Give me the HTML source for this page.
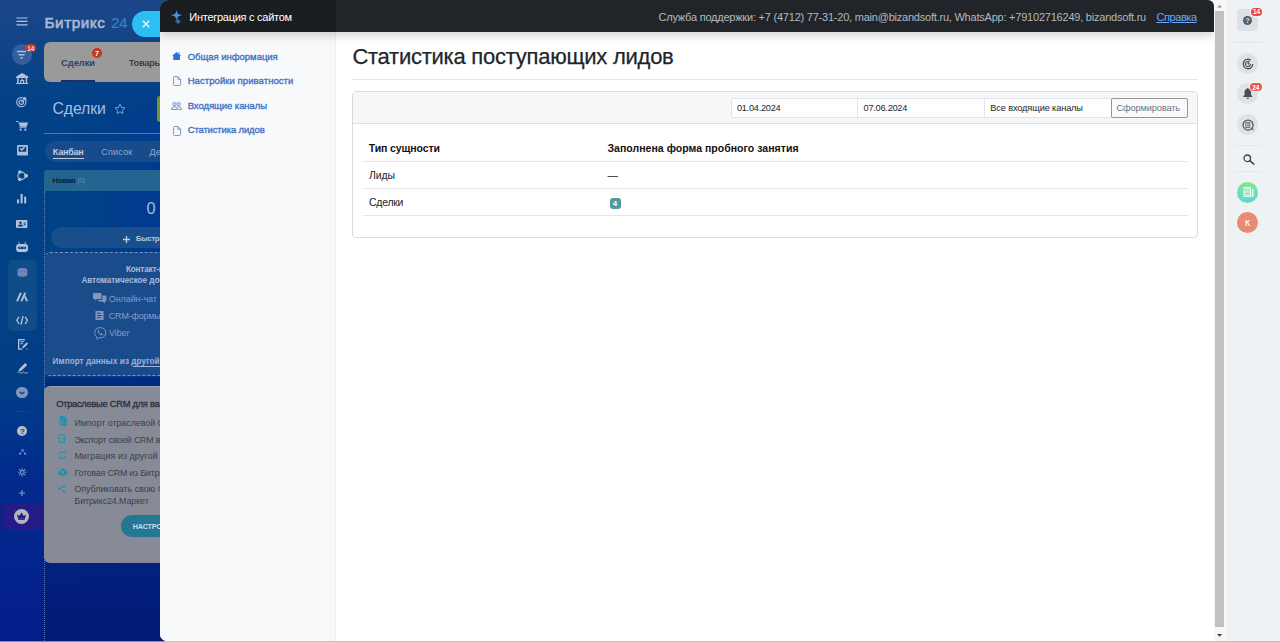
<!DOCTYPE html>
<html lang="ru"><head>
<meta charset="utf-8">
<title>Интеграция с сайтом</title>
<style>
*{box-sizing:border-box;margin:0;padding:0}
html,body{width:1280px;height:642px;overflow:hidden}
body{font-family:"Liberation Sans","DejaVu Sans",sans-serif;position:relative;background:#0b2a9a}
.abs{position:absolute}
.t{position:absolute;white-space:nowrap;line-height:1}
svg{position:absolute;overflow:visible}
#bg{left:0;top:0;width:1280px;height:642px;background:linear-gradient(180deg,#1c478a 0%,#144588 4.7%,#0b4486 10%,#034186 15.6%,#004286 31%,#024185 47%,#023c86 62%,#003486 68.5%,#022a86 74.8%,#012580 85%,#021e7a 93.5%,#021b76 100%);overflow:hidden}
#lstrip{left:70px;top:40px;width:90px;height:560px;background:linear-gradient(90deg,rgba(0,30,190,0),rgba(0,30,190,.22));-webkit-mask-image:linear-gradient(180deg,transparent 0%,#000 25%,#000 55%,transparent 100%);mask-image:linear-gradient(180deg,transparent 0%,#000 25%,#000 55%,transparent 100%)}
#lstrip2{left:0;top:380px;width:44px;height:262px;background:linear-gradient(180deg,rgba(10,40,200,0),rgba(10,40,200,.2) 70%,rgba(10,40,200,.22))}
/* ---------- main slider panel ---------- */
#panel{left:160px;top:0;width:1054px;height:640.700px;background:#fff;border-radius:9px 6px 0 7px;overflow:hidden}
#phead{left:0;top:0;width:1054px;height:32px;background:#212529;box-shadow:0 3px 11px rgba(0,0,0,.2);z-index:3}
#pheadl{left:0;top:0;width:175.500px;height:32px;background:#1b1e21}
#side{left:0;top:32px;width:176px;height:610px;background:#f8f9fa;border-right:1px solid #eceef1}
#scroll{left:1214px;top:0;width:12px;height:642px;background:#f6f6f6;border-right:1px solid #fafbfc}
#thumb{left:1px;top:11px;width:9px;height:616px;background:#c1c1c1}
#right{left:1226px;top:0;width:54px;height:642px;background:#eef2f4}
#botline{left:0;top:640.700px;width:1280px;height:1.300px;background:linear-gradient(90deg,#7388d6 0,#7388d6 163px,#c2c2c2 165px,#c2c2c2 1214px,#b9c0cd 1226px,#b9c0cd 100%)}
/* content */
#title{color:#212529}
#hr{left:192px;top:79px;width:846px;height:1px;background:#e4e6e8}
#card{left:192px;top:91px;width:846px;height:147px;border:1px solid #d9dcdf;border-radius:4px;background:#fff}
#chead{left:0;top:0;width:844px;height:32px;background:#f7f7f7;border-bottom:1px solid #dcdfe2;border-radius:3px 3px 0 0}
.inp{position:absolute;top:5.500px;height:20px;border:1px solid #e1e4e8;background:#fff}
.inp .t{color:#212529}
#btn{position:absolute;left:758px;top:5.500px;width:77px;height:20px;border:1px solid #959595;border-radius:2px;background:#fafafa}
#btn .t{color:#6c757d}
.rl{position:absolute;left:10px;width:825px;height:1px;background:#e3e5e8}
.th{font-weight:bold;color:#111}
.td{color:#212529}
#b4{position:absolute;left:256.500px;top:105.500px;width:11px;height:11.500px;border-radius:3px;background:#4f9a9f}
#b4 .t{font-weight:bold;color:#fff}
.sl{font-weight:normal;color:#3d6fc4;-webkit-text-stroke:.32px #3d6fc4}
/* left bitrix */
.ic{fill:#b4c0d8}
.lt{color:#a9bbdc;font-weight:bold}
.gl{color:#3a3f4a}
</style>
</head>
<body>
<div id="bg" class="abs">
<div id="lstrip" class="abs"></div><div id="lstrip2" class="abs"></div>

<!-- top bar -->
<svg style="left:16px;top:17px" width="12" height="9"><path d="M.5 1h11M.5 4.4h11M.5 7.8h11" stroke="#b8c6e0" stroke-width="1.2" fill="none"></path></svg>
<div class="t" style="left: 44.5px; font-size: 15.3px; -webkit-text-stroke: 0.6px rgb(172, 184, 210); color: rgb(172, 184, 210); letter-spacing: 0.54px; top: 14.6px;">Битрикс</div>
<div class="t" style="left: 110.9px; font-size: 15.3px; -webkit-text-stroke: 0.2px rgb(58, 128, 189); color: rgb(58, 128, 189); letter-spacing: -0.42px; top: 14.6px;">24</div>
<div class="abs" style="left:132px;top:11px;width:40px;height:25.5px;border-radius:13px;background:#2cbef5"></div>
<svg style="left:141.5px;top:20.3px" width="8" height="8"><path d="M.8 .8 L7.2 7.2 M7.2 .8 L.8 7.2" stroke="#f4fbff" stroke-width="1.250" fill="none"></path></svg>
<!-- menu card -->
<div class="abs" style="left:44px;top:42px;width:130px;height:39.5px;border-radius:6px;background:#9a9a9a"></div>
<div class="t" style="left: 61.1px; font-size: 9.3px; font-weight: bold; color: rgb(47, 63, 108); letter-spacing: -0.03px; top: 58.7px;">Сделки</div>
<div class="abs" style="left:61px;top:80px;width:34px;height:2px;background:#1f3060"></div>
<div class="abs" style="left:91.7px;top:48.1px;width:10px;height:10px;border-radius:5px;background:#c43a1e"></div>
<div class="t" style="left: 95px; font-size: 7px; font-weight: bold; color: rgb(255, 255, 255); top: 49.7px;">7</div>
<div class="t" style="left: 128.8px; font-size: 9.3px; font-weight: bold; color: rgb(62, 65, 72); letter-spacing: -0.33px; top: 58.7px;">Товары</div>
<!-- title row -->
<div class="t" style="left: 52.6px; font-size: 15.8px; color: rgb(168, 188, 224); letter-spacing: -0.13px; top: 101.1px;">Сделки</div>
<svg style="left:114px;top:102.7px" width="12" height="12" viewBox="0 0 24 24"><path d="M12 2.5l2.9 6.3 6.8.8-5 4.7 1.3 6.8-6-3.4-6 3.4 1.3-6.8-5-4.7 6.8-.8z" fill="none" stroke="#8fa8d8" stroke-width="1.8" stroke-linejoin="round"></path></svg>
<div class="abs" style="left:157.2px;top:96.3px;width:10px;height:25.7px;border-radius:3px;background:#78962a"></div>
<div class="abs" style="left:44px;top:133.3px;width:120px;height:1px;background:rgba(160,190,235,.45)"></div>
<!-- tabs -->
<div class="abs" style="left:44.5px;top:141.3px;width:130px;height:21px;border-radius:10.5px;background:#174b8b"></div>
<div class="t" style="left: 52.8px; font-size: 9px; font-weight: bold; color: rgb(192, 204, 228); letter-spacing: -0.23px; top: 148.2px;">Канбан</div>
<div class="abs" style="left:52.8px;top:158px;width:31px;height:1px;background:#c0cce4"></div>
<div class="t" style="left: 101.3px; font-size: 9px; color: rgb(143, 168, 212); letter-spacing: 0.21px; top: 148.2px;">Список</div>
<div class="t" style="left: 149.6px; font-size: 9px; color: rgb(143, 168, 212); top: 148.2px;">Дела</div>
<!-- kanban column -->
<div class="abs" style="left:44px;top:170px;width:130px;height:21px;border-radius:3px 0 0 0;background:#236590"></div>
<div class="t" style="left: 52.2px; font-size: 8px; font-weight: bold; color: rgb(12, 34, 56); letter-spacing: -0.32px; top: 177.1px;">Новая</div>
<div class="t" style="left: 77.5px; font-size: 7px; color: rgb(93, 140, 180); letter-spacing: -0.53px; top: 177px;">(0)</div>
<div class="abs" style="left:44px;top:191px;width:1px;height:450px;border-left:1px dotted rgba(160,190,240,.55)"></div>
<div class="t" style="left: 146.6px; font-size: 16.3px; color: rgb(163, 188, 230); letter-spacing: -0.76px; top: 200.2px;">0</div>
<div class="abs" style="left:50.6px;top:227.2px;width:130px;height:20.5px;border-radius:10.3px;background:#194e8c"></div>
<svg style="left:123px;top:235.5px" width="7" height="7"><path d="M3.5 0v7M0 3.5h7" stroke="#c0cce4" stroke-width="1.3"></path></svg>
<div class="t lt" style="left: 136px; font-size: 7.6px; color: rgb(184, 198, 224); letter-spacing: -0.26px; top: 235.1px;">Быстрая сделка</div>
<!-- dashed card -->
<div class="abs" style="left:44.5px;top:252.3px;width:130px;height:124px;border-radius:5px;background:#1a4c8b;border:1px dashed rgba(170,200,240,.6);border-left:none"></div>
<div class="t lt" style="left: 126px; font-size: 8.2px; letter-spacing: -0.19px; top: 266.1px;">Контакт-центр</div>
<div class="t lt" style="left: 81.4px; font-size: 8.2px; letter-spacing: -0.06px; top: 277.4px;">Автоматическое добавление</div>
<div class="t" style="left: 108.8px; font-size: 9px; color: rgb(127, 156, 207); letter-spacing: -0.09px; top: 294.9px;">Онлайн-чат</div>
<div class="t" style="left: 108.8px; font-size: 9px; color: rgb(127, 156, 207); letter-spacing: -0.2px; top: 311.9px;">CRM-формы</div>
<div class="t" style="left: 109.1px; font-size: 9px; color: rgb(127, 156, 207); letter-spacing: -0.14px; top: 328.6px;">Viber</div>
<div class="t lt" style="left: 52.6px; font-size: 8.2px; color: rgb(157, 178, 218); letter-spacing: 0.05px; top: 358.1px;">Импорт данных из другой CRM</div>
<div class="abs" style="left:132.500px;top:365.600px;width:40px;height:1px;background:#9db2da"></div>
<!-- grey card -->
<div class="abs" style="left:45px;top:377px;width:130px;height:12px;background:linear-gradient(180deg,rgba(2,20,110,.28),rgba(2,20,110,.5))"></div>
<div class="abs" style="left:44px;top:386px;width:130px;height:177px;border-radius:6px;background:#878b97;border-top:1px solid #9aa0ae"></div>
<div class="t" style="left: 56.2px; font-size: 9.3px; -webkit-text-stroke: 0.3px rgb(42, 47, 58); color: rgb(42, 47, 58); letter-spacing: -0.26px; top: 399.6px;">Отраслевые CRM для вашего бизнеса</div>
<div class="t gl" style="left: 74.4px; font-size: 8.9px; letter-spacing: -0.03px; top: 418.8px;">Импорт отраслевой CRM</div>
<div class="t gl" style="left: 74.4px; font-size: 8.9px; letter-spacing: -0.19px; top: 435.6px;">Экспорт своей CRM в файл</div>
<div class="t gl" style="left: 74.4px; font-size: 8.9px; letter-spacing: 0.08px; top: 452.1px;">Миграция из другой CRM</div>
<div class="t gl" style="left: 74.4px; font-size: 8.9px; letter-spacing: -0.2px; top: 469.2px;">Готовая CRM из Битрикс24.Маркет</div>
<div class="t gl" style="left: 74.4px; font-size: 8.9px; letter-spacing: -0.02px; top: 484.5px;">Опубликовать свою CRM в</div>
<div class="t gl" style="left: 74.4px; font-size: 8.9px; letter-spacing: -0.08px; top: 497.3px;">Битрикс24.Маркет</div>
<div class="abs" style="left:120.8px;top:515.3px;width:60px;height:21.5px;border-radius:10.8px;background:#247894"></div>
<div class="t" style="left: 132.7px; font-size: 7.2px; font-weight: bold; color: rgb(200, 220, 232); letter-spacing: -0.13px; top: 522.8px;">НАСТРОИТЬ</div>

<!-- chat icon -->
<svg style="left:93px;top:292.800px" width="13.400" height="10.600" viewBox="0 0 27 21"><path d="M2 0h13a2 2 0 0 1 2 2v8a2 2 0 0 1-2 2H8l-4 3.500V12H2a2 2 0 0 1-2-2V2a2 2 0 0 1 2-2z" fill="#8596bd"></path><path d="M19 5h6a2 2 0 0 1 2 2v8a2 2 0 0 1-2 2h-1v4l-4.500-4H13a2 2 0 0 1-2-2v-1h6a2 2 0 0 0 2-2z" fill="#8596bd"></path></svg>
<!-- form icon -->
<svg style="left:95.300px;top:311.100px" width="9" height="9.200" viewBox="0 0 18 18"><path d="M1 0h16v18H1zM4 3.500v2h7v-2zM4 8v2h10V8zM4 12.500v2h8v-2z" fill="#8596bd" fill-rule="evenodd"></path></svg>
<!-- viber -->
<svg style="left:93.500px;top:326.800px" width="12.400" height="13" viewBox="0 0 25 26"><path d="M12.500 1.200c7 0 11 3.500 11 10.300s-4 10.300-11 10.300c-1 0-2-.1-2.900-.3L6 25v-4.700C3 18.600 1.500 15.700 1.500 11.500c0-6.800 4-10.300 11-10.300z" fill="none" stroke="#8596bd" stroke-width="2"></path><path d="M8.500 6.500c-1 .8-1.200 2-.6 3.400 1.300 3 3.500 5.300 6.600 6.600 1.300.5 2.500.2 3.200-.9.400-.7.200-1.300-.4-1.700l-1.500-1c-.6-.4-1.200-.3-1.700.3-.4.500-.9.500-1.500.1-1.200-.8-2.100-1.800-2.800-3-.3-.6-.2-1 .3-1.400.6-.5.700-1.100.3-1.700l-.7-1.100c-.4-.6-.9-.7-1.500-.3z" fill="#8596bd"></path></svg>
<!-- grey-card teal icons -->
<svg style="left:58.400px;top:416px" width="8.800" height="9.900" viewBox="0 0 18 20"><path d="M4 0h9l5 5v15H4v-6h2.500v2.800l5.200-4.300-5.200-4.300V11H4zM0 11.500h7v2H0z" fill="#2a8fa8"></path></svg>
<svg style="left:58.400px;top:433.600px" width="8.800" height="9.100" viewBox="0 0 18 18"><path d="M1 0h10l3 3v4h-2.200V4.200L10 2.200H3.200v13.600H12V13h2.200v5H1z" fill="#2a8fa8"></path><path d="M7 9h8.500M13 6l3.500 3.500L13 13" stroke="#2a8fa8" stroke-width="2" fill="none"></path></svg>
<svg style="left:58.400px;top:451px" width="8.800" height="8.400" viewBox="0 0 18 17"><path d="M2 7c.5-3.500 3.500-5.500 7-5.500 2 0 3.800.8 5 2.200M16 10c-.5 3.500-3.500 5.500-7 5.500-2 0-3.800-.8-5-2.200" stroke="#2a8fa8" stroke-width="2.400" fill="none"></path><path d="M12 4.500h5V0zM6 12.500H1V17z" fill="#2a8fa8"></path></svg>
<svg style="left:57.800px;top:468px" width="9.400" height="7.800" viewBox="0 0 19 15"><path d="M5 15c-3 0-5-2-5-4.500S1.700 6.300 4 6c.5-3.500 3-6 6.300-6 3 0 5.400 2 6 5 1.700.8 2.700 2.500 2.700 4.500 0 3-2.300 5.500-5.500 5.500zM9.800 5.200a2.800 2.800 0 1 0 0 5.600 2.800 2.800 0 0 0 0-5.600z" fill="#2a8fa8" fill-rule="evenodd"></path></svg>
<svg style="left:58.400px;top:485px" width="7.600" height="7.600" viewBox="0 0 15 15"><circle cx="12" cy="2.600" r="2.600" fill="#2a8fa8"></circle><circle cx="3" cy="7.500" r="2.600" fill="#2a8fa8"></circle><circle cx="12" cy="12.400" r="2.600" fill="#2a8fa8"></circle><path d="M12 2.600L3 7.500l9 4.900" stroke="#2a8fa8" stroke-width="1.500" fill="none"></path></svg>
<!-- left icon strip -->
<div class="abs" style="left:7.5px;top:259.7px;width:29px;height:71.5px;border-radius:5px;background:#0e4c8a"></div>
<div class="abs" style="left:0;top:504px;width:44px;height:25.7px;background:linear-gradient(90deg,#0b2486 0,#231b86 5px,#231b86 100%)"></div>

<!-- filter circle -->
<div class="abs" style="left:11.5px;top:44.2px;width:20.6px;height:20.6px;border-radius:50%;background:#335f9f"></div>
<svg style="left:16px;top:50px" width="12" height="10"><path d="M1 1.6h9.2M2.6 4.8h6M4.4 8.1h2.4" stroke="#a9bfe0" stroke-width="1.5" fill="none"></path></svg>
<div class="abs" style="left:25.4px;top:44.4px;width:11px;height:8px;border-radius:4px;background:#c23e22"></div>
<div class="t" style="left: 27.3px; font-size: 6.5px; font-weight: bold; color: rgb(244, 220, 214); letter-spacing: -0.2px; top: 45.8px;">14</div>
<!-- building -->
<svg style="left:16px;top:73px" width="12.4" height="11" viewBox="0 0 24 22"><path d="M12 0L0 7v3h2v10H0v2h24v-2h-2V10h2V7zM5 10h14v10h-3v-6H8v6H5zM10.4 16h3.2v4h-3.2z" fill="#b4c0d8"></path><rect x="10.3" y="11.3" width="3.4" height="2.2" fill="#b4c0d8"></rect></svg>
<!-- target -->
<svg style="left:16px;top:96px" width="11.6" height="11.4" viewBox="0 0 24 24"><circle cx="11" cy="13" r="9.6" fill="none" stroke="#b4c0d8" stroke-width="2.4"></circle><circle cx="11" cy="13" r="4.6" fill="none" stroke="#b4c0d8" stroke-width="2.2"></circle><path d="M11 13L21 3M17 2.2l.6 4.3 4.3.6" stroke="#b4c0d8" stroke-width="2.4" fill="none"></path></svg>
<!-- cart -->
<svg style="left:15.6px;top:121px" width="12.2" height="10" viewBox="0 0 24 20"><path d="M0 0h4.2l1 3H24l-3 8.6H8.2L4.2 2H0z" fill="#b4c0d8"></path><path d="M6.5 12.5h14" stroke="#b4c0d8" stroke-width="1.8"></path><circle cx="9" cy="17.3" r="2.3" fill="#b4c0d8"></circle><circle cx="18.6" cy="17.3" r="2.3" fill="#b4c0d8"></circle></svg>
<!-- task check -->
<svg style="left:16.7px;top:144.7px" width="11" height="10.4" viewBox="0 0 22 21"><path d="M2 0h18a2 2 0 0 1 2 2v17a2 2 0 0 1-2 2H2a2 2 0 0 1-2-2V2a2 2 0 0 1 2-2zM3.4 3.4v10h15.2v-10zM9.6 11.4L6 7.8l1.6-1.6 2 2 4.8-4.8L16 5z" fill="#b4c0d8" fill-rule="evenodd"></path><path d="M9.6 11.6L5.8 7.8l1.7-1.7 2.1 2.1 4.7-4.7L16 5.200z" fill="#b4c0d8"></path></svg>
<!-- share circles -->
<svg style="left:16px;top:169.5px" width="12.2" height="11.2" viewBox="0 0 24 22"><circle cx="11" cy="11.5" r="7.3" fill="none" stroke="#b4c0d8" stroke-width="2.2"></circle><circle cx="7.5" cy="4" r="3.6" fill="#b4c0d8"></circle><circle cx="7.5" cy="18.4" r="3.6" fill="#b4c0d8"></circle><circle cx="20" cy="11.4" r="3.8" fill="#b4c0d8"></circle></svg>
<!-- bars -->
<svg style="left:17.2px;top:194.3px" width="9.4" height="9.4" viewBox="0 0 19 19"><rect x="0" y="11" width="4.2" height="8" fill="#b4c0d8"></rect><rect x="7.2" y="0" width="4.2" height="19" fill="#b4c0d8"></rect><rect x="14.4" y="5.5" width="4.2" height="13.500" fill="#b4c0d8"></rect></svg>
<!-- contact card -->
<svg style="left:16.4px;top:219.6px" width="11.4" height="8" viewBox="0 0 23 16"><path d="M2 0h19a2 2 0 0 1 2 2v12a2 2 0 0 1-2 2H2a2 2 0 0 1-2-2V2a2 2 0 0 1 2-2zM9 3.200a2.500 2.500 0 1 0 0 5 2.500 2.500 0 0 0 0-5zM4 13h10c0-2.600-2-3.800-5-3.800S4 10.400 4 13zM15.500 5h4.300v1.800h-4.300zM15.500 8.500h4.300v1.800h-4.300z" fill="#b4c0d8" fill-rule="evenodd"></path></svg>
<!-- robot -->
<svg style="left:16px;top:242.4px" width="12.2" height="9.900" viewBox="0 0 24 20"><path d="M4.500 0l2.300 3.400M19.500 0l-2.300 3.400" stroke="#b4c0d8" stroke-width="2"></path><path d="M5 4h14c3 0 5 2.300 5 5.500v5c0 3.200-2 5.500-5 5.500H5c-3 0-5-2.300-5-5.500v-5C0 6.300 2 4 5 4zM6 9.500c-1.600 0-2.400.9-2.400 2.300s.8 2.300 2.400 2.300h12c1.600 0 2.400-.9 2.400-2.300s-.8-2.300-2.400-2.300z" fill="#b4c0d8" fill-rule="evenodd"></path><circle cx="8.200" cy="11.800" r="1.300" fill="#b4c0d8"></circle><circle cx="15.800" cy="11.800" r="1.300" fill="#b4c0d8"></circle></svg>
<!-- cube (dim) -->
<svg style="left:16.9px;top:267.8px" width="10.800" height="8.800" viewBox="0 0 22 18"><path d="M11 0c5 0 10 1.200 10 3.600v10.800C21 16.800 16 18 11 18S1 16.800 1 14.400V3.600C1 1.200 6 0 11 0z" fill="#6d87b8"></path><path d="M1.500 4.600c2.500 1.700 6 2.200 9.500 2.200s7-.5 9.500-2.200" stroke="#4f6fa6" stroke-width="1.200" fill="none"></path></svg>
<!-- M slashes -->
<svg style="left:16px;top:291.700px" width="12.200" height="9.200" viewBox="0 0 24 18"><path d="M0 18L7.500 1.500h4.200L4.200 18zM8.500 18L16 1.500h4.200L12.700 18z" fill="#b4c0d8"></path><path d="M17.800 5.500L24 18h-4.400l-3.400-8z" fill="#b4c0d8"></path></svg>
<!-- code -->
<svg style="left:16px;top:315.900px" width="12.200" height="8.600" viewBox="0 0 24 17"><path d="M6 1.500L1.500 8.500 6 15.500M18 1.500l4.500 7-4.500 7" stroke="#b4c0d8" stroke-width="2.600" fill="none" stroke-linejoin="miter"></path><path d="M14 0L9.800 17" stroke="#b4c0d8" stroke-width="2.600"></path></svg>
<!-- doc edit -->
<svg style="left:17.600px;top:339.300px" width="10.200" height="10.700" viewBox="0 0 20 21"><path d="M0 0h13.500v2.400H2.600v16.200h6V21H0z" fill="#b4c0d8"></path><path d="M4.500 5.200h7.500M4.500 9.200h5.500" stroke="#b4c0d8" stroke-width="1.900"></path><path d="M17 6.500l2.800 2.800-8 8-3.600.9.800-3.700z" fill="#b4c0d8"></path><path d="M15.500 19.500l2 .1 1.500 1" stroke="#b4c0d8" stroke-width="1.200" fill="none"></path></svg>
<!-- sign -->
<svg style="left:16.700px;top:363.200px" width="11.500" height="10.400" viewBox="0 0 23 21"><path d="M16.500 0l4 4L8.500 15.500l-5.500 1.700 1.600-5.600z" fill="#b4c0d8"></path><path d="M1 19.500c2-2 3.500-2 5 0s3 2 4.500 0 3-2 4.500 0 3.500 1.500 6.500-.5" stroke="#b4c0d8" stroke-width="1.900" fill="none"></path></svg>
<!-- chevron circle -->
<div class="abs" style="left:16.300px;top:387.100px;width:11.400px;height:11.400px;border-radius:50%;background:#8296bd"></div>
<svg style="left:19px;top:391px" width="6" height="4"><path d="M.6.700L3 3l2.400-2.300" stroke="#16386f" stroke-width="1.200" fill="none"></path></svg>
<div class="abs" style="left:13.500px;top:411px;width:15px;height:1px;background:rgba(150,180,230,.1)"></div>
<!-- help -->
<div class="abs" style="left:16.800px;top:426px;width:10.400px;height:10.400px;border-radius:50%;background:#b9bdc8"></div>
<div class="t" style="left: 19.9px; font-size: 8px; font-weight: bold; color: rgb(28, 47, 92); top: 428px;">?</div>
<!-- sitemap dim -->
<svg style="left:18.600px;top:449.100px" width="7.200" height="5.800" viewBox="0 0 14 11"><circle cx="7" cy="2" r="2" fill="#7f98cc"></circle><circle cx="2" cy="9" r="2" fill="#7f98cc"></circle><circle cx="12" cy="9" r="2" fill="#7f98cc"></circle><path d="M7 2L2 9M7 2l5 7" stroke="#7f98cc" stroke-width="1.300" fill="none"></path></svg>
<!-- gear dim -->
<svg style="left:17.800px;top:468.300px" width="8.400" height="8.400" viewBox="0 0 16 16"><circle cx="8" cy="8" r="3.600" fill="none" stroke="#7f98cc" stroke-width="2.200"></circle><path d="M8 0v3M8 13v3M0 8h3M13 8h3M2.300 2.300l2.200 2.200M11.500 11.500l2.200 2.200M2.300 13.700l2.200-2.200M11.500 4.500l2.200-2.200" stroke="#7f98cc" stroke-width="2"></path></svg>
<!-- plus dim -->
<svg style="left:19px;top:490px" width="6" height="6"><path d="M3 0v6M0 3h6" stroke="#7f98cc" stroke-width="1.200"></path></svg>
<!-- crown -->
<div class="abs" style="left:13.800px;top:509.100px;width:15px;height:15px;border-radius:50%;background:#b3b4bd"></div>
<svg style="left:16.800px;top:512.200px" width="9" height="8" viewBox="0 0 18 16"><path d="M0 5l4.500 3L9 1l4.500 7L18 5l-2 8.500H2z" fill="#231b86"></path><rect x="2.500" y="14" width="13" height="1.800" fill="#231b86"></rect></svg>


</div>

<div class="abs" style="left:1200px;top:0;width:14px;height:12px;background:#f8f8f8"></div>
<div id="panel" class="abs">
<div id="side" class="abs">


<svg style="left:12px;top:20.300px" width="9.200" height="8" viewBox="0 0 18 16"><path d="M9 0l9 7.500h-2.300V16H2.300V7.500H0zM13 1h2.500v3L13 2z" fill="#2f6fdb"></path></svg>
<svg style="left:12.700px;top:44px" width="8.200" height="10" viewBox="0 0 16 20"><path d="M3 1h6.500L15 6.500V17a2 2 0 0 1-2 2H3a2 2 0 0 1-2-2V3a2 2 0 0 1 2-2zM9.500 1v5.500H15" fill="none" stroke="#6d86b8" stroke-width="1.700"></path></svg>
<svg style="left:11.200px;top:69.500px" width="10.800" height="8" viewBox="0 0 22 16"><circle cx="7" cy="4.200" r="3.200" fill="none" stroke="#3d77d6" stroke-width="1.700"></circle><circle cx="15.500" cy="4.200" r="3.200" fill="none" stroke="#3d77d6" stroke-width="1.700"></circle><path d="M1 15c0-3.500 2.500-5.500 6-5.500s6 2 6 5.500zM13 9.800c.8-.2 1.600-.3 2.500-.3 3.500 0 5.500 2 5.500 5.500h-6" fill="none" stroke="#3d77d6" stroke-width="1.700"></path></svg>
<svg style="left:12.700px;top:93.500px" width="8.200" height="10" viewBox="0 0 16 20"><path d="M3 1h6.500L15 6.500V17a2 2 0 0 1-2 2H3a2 2 0 0 1-2-2V3a2 2 0 0 1 2-2zM9.500 1v5.500H15" fill="none" stroke="#6d86b8" stroke-width="1.700"></path></svg>
<div class="t sl" style="left: 27.7px; font-size: 9.5px; letter-spacing: -0.02px; top: 19.5px;">Общая информация</div>
<div class="t sl" style="left: 27.7px; font-size: 9.5px; letter-spacing: 0.07px; top: 44px;">Настройки приватности</div>
<div class="t sl" style="left: 27.7px; font-size: 9.5px; letter-spacing: -0.06px; top: 68.8px;">Входящие каналы</div>
<div class="t sl" style="left: 27.7px; font-size: 9.5px; letter-spacing: -0.15px; top: 93.4px;">Статистика лидов</div>

</div>
<div id="phead" class="abs">
<div id="pheadl" class="abs"></div>

<svg style="left:0;top:0" width="30" height="30"><path d="M16.500 10.800 Q16.800 14.900 21.300 15.200 Q16.800 15.500 16.500 19.800 Q16.200 15.500 11.700 15.200 Q16.200 14.900 16.500 10.800Z" fill="#4a93ea" stroke="#4a93ea" stroke-width=".5"></path><path d="M18 18.600 Q18.200 21.200 20.600 21.400 Q18.200 21.600 18 24.200 Q17.800 21.600 15.400 21.400 Q17.800 21.200 18 18.600Z" fill="#3f7fd0" stroke="#3f7fd0" stroke-width=".4"></path></svg>
<div class="t" style="left: 29.3px; font-size: 11px; color: rgb(255, 255, 255); letter-spacing: -0.27px; top: 11.5px;">Интеграция с сайтом</div>
<div class="t" style="left: 498.5px; font-size: 11px; color: rgb(180, 185, 190); letter-spacing: -0.22px; top: 11.5px;">Служба поддержки: +7 (4712) 77-31-20, main@bizandsoft.ru, WhatsApp: +79102716249, bizandsoft.ru</div>
<div class="t" style="left: 996.5px; font-size: 11px; color: rgb(110, 168, 254); text-decoration: underline; letter-spacing: -0.44px; top: 11.5px;">Справка</div>

</div>

<div id="title" class="t" style="left: 192.4px; font-size: 22px; -webkit-text-stroke: 0.25px rgb(33, 37, 41); letter-spacing: -0.25px; top: 45.7px;">Статистика поступающих лидов</div>
<div id="hr" class="abs"></div>
<div id="card" class="abs">
 <div id="chead" class="abs">
  <div class="inp" style="left:378px;width:127px"><div class="t" style="left: 4.9px; font-size: 9.2px; letter-spacing: -0.25px; top: 5.1px;">01.04.2024</div></div>
  <div class="inp" style="left:504px;width:128px"><div class="t" style="left: 5.6px; font-size: 9.2px; letter-spacing: -0.25px; top: 5.1px;">07.06.2024</div></div>
  <div class="inp" style="left:631px;width:128px"><div class="t" style="left: 5.3px; font-size: 9.2px; letter-spacing: -0.12px; top: 5.1px;">Все входящие каналы</div></div>
  <div id="btn"><div class="t" style="left: 4.6px; font-size: 9.2px; letter-spacing: -0.11px; top: 5.1px;">Сформировать</div></div>
 </div>
 <div class="t th" style="left: 15.8px; font-size: 10.5px; letter-spacing: -0.1px; top: 51px;">Тип сущности</div>
 <div class="t th" style="left: 254.5px; font-size: 10.5px; letter-spacing: 0.03px; top: 51px;">Заполнена форма пробного занятия</div>
 <div class="rl" style="top:69px"></div>
 <div class="t td" style="left: 16px; font-size: 10.5px; letter-spacing: -0.15px; top: 77.8px;">Лиды</div>
 <div class="t td" style="left: 254.5px; font-size: 10.5px; letter-spacing: 0px; top: 77.8px;">—</div>
 <div class="rl" style="top:96px"></div>
 <div class="t td" style="left: 16px; font-size: 10.5px; letter-spacing: -0.26px; top: 105.2px;">Сделки</div>
 <div id="b4"><div class="t" style="left: 3.2px; font-size: 8px; top: 2.8px;">4</div></div>
 <div class="rl" style="top:123px"></div>
</div>

</div>

<div id="scroll" class="abs">
<div id="thumb" class="abs"></div>
<svg style="left:0;top:0" width="12" height="12"><path d="M3.2 7.6 L5.6 5 L8 7.6Z" fill="#8a8a8a"></path></svg>
<svg style="left:0;top:630px" width="12" height="12"><path d="M3 3.9 L5.6 6.8 L8.2 3.9Z" fill="#404040"></path></svg>
</div>

<div id="right" class="abs">

<div class="abs" style="left:11.200px;top:9.400px;width:20.400px;height:21.200px;border-radius:4.500px;background:#dde1e5"></div>
<div class="abs" style="left:16.500px;top:15.900px;width:9.400px;height:9.400px;border-radius:50%;background:#535c69"></div>
<div class="t" style="left: 19.2px; font-size: 7.5px; font-weight: bold; color: rgb(221, 225, 229); top: 17.3px;">?</div>
<div class="abs" style="left:24.300px;top:6.600px;width:12.600px;height:10px;border-radius:5px;background:#f3f5f6"></div>
<div class="abs" style="left:25.300px;top:7.600px;width:10.600px;height:8px;border-radius:4px;background:#e64a3b"></div>
<div class="t" style="left: 27px; font-size: 6.5px; font-weight: bold; color: rgb(255, 255, 255); letter-spacing: -0.2px; top: 9px;">14</div>
<div class="abs" style="left:6.500px;top:42px;width:30.500px;height:1px;background:#e1e5e9"></div>
<!-- circle 1 -->
<div class="abs" style="left:11.100px;top:53.100px;width:21.200px;height:21.200px;border-radius:50%;background:#dee2e7"></div>
<svg style="left:15.700px;top:57.700px" width="12" height="12" viewBox="0 0 24 24"><path d="M21.500 12a9.500 9.500 0 1 1-4-7.700" fill="none" stroke="#4d5663" stroke-width="2.700"></path><path d="M17.200 12a5.200 5.200 0 1 1-2.300-4.300" fill="none" stroke="#4d5663" stroke-width="2.500"></path><circle cx="13" cy="11" r="2.300" fill="#4d5663"></circle></svg>
<!-- circle 2 bell -->
<div class="abs" style="left:11.100px;top:83.200px;width:21.200px;height:21.200px;border-radius:50%;background:#dee2e7"></div>
<svg style="left:17px;top:88.300px" width="9.600" height="11.400" viewBox="0 0 19 23"><path d="M9.500 0c1 0 1.600.6 1.600 1.500 3 .8 4.900 3.300 4.900 6.500v5.500l2.500 3V18H.5v-1.500l2.500-3V8c0-3.200 1.900-5.700 4.900-6.500C7.900.6 8.500 0 9.500 0zM7.200 19.500h4.600c0 1.500-1 2.500-2.300 2.500s-2.300-1-2.300-2.500z" fill="#464e5b"></path></svg>
<div class="abs" style="left:22.900px;top:82.300px;width:14.200px;height:9.800px;border-radius:4.900px;background:#f3f5f6"></div>
<div class="abs" style="left:23.900px;top:83.300px;width:12.200px;height:7.800px;border-radius:3.900px;background:#e8564a"></div>
<div class="t" style="left: 26.3px; font-size: 6.5px; font-weight: bold; color: rgb(255, 255, 255); letter-spacing: -0.1px; top: 84.7px;">24</div>
<!-- circle 3 -->
<div class="abs" style="left:11.100px;top:114.300px;width:21.200px;height:21.200px;border-radius:50%;background:#dee2e7"></div>
<svg style="left:15.600px;top:118.600px" width="12.600" height="12.600" viewBox="0 0 25 25"><path d="M12 2a10 10 0 1 1 0 20 10 10 0 0 1 0-20z" fill="none" stroke="#4d5663" stroke-width="2.500"></path><path d="M18.500 19.500l4.500 3.500-1-5z" fill="#4d5663"></path><path d="M7.500 7h8v10h-8zM9.500 10h5M9.500 13.500h5" fill="none" stroke="#4d5663" stroke-width="1.600"></path></svg>
<div class="abs" style="left:6.500px;top:145px;width:30.500px;height:1px;background:#e4e8eb"></div>
<!-- search -->
<svg style="left:16.600px;top:154.200px" width="11.600" height="10.600" viewBox="0 0 23 21"><circle cx="8.500" cy="8.500" r="6.500" fill="none" stroke="#3d4450" stroke-width="2.600"></circle><path d="M13.500 13l8 7" stroke="#3d4450" stroke-width="3" stroke-linecap="round"></path></svg>
<div class="abs" style="left:6.500px;top:171px;width:30.500px;height:1px;background:#e4e8eb"></div>
<!-- green circle -->
<div class="abs" style="left:11.300px;top:181.500px;width:21.200px;height:21.200px;border-radius:50%;background:linear-gradient(180deg,#83e58c 0%,#6fe0b0 50%,#5dd9d6 100%)"></div>
<svg style="left:16.500px;top:187px" width="11" height="10" viewBox="0 0 22 20"><path d="M1 0h15v20H1z" fill="#e9fbf3"></path><path d="M17.500 4H21v14.500c0 1-.7 1.500-1.700 1.500s-1.800-.5-1.800-1.500z" fill="#e9fbf3"></path><path d="M3.500 3.500h4v3.500h-4zM9.500 4h4.500M9.500 6.500h4.500M3.500 10h10.500M3.500 13h10.500M3.500 16h10.500" stroke="#6fd9b6" stroke-width="1.500" fill="none"></path></svg>
<!-- orange K -->
<div class="abs" style="left:11.300px;top:212.200px;width:21.200px;height:21.200px;border-radius:50%;background:#e98b74"></div>
<div class="t" style="left: 19px; font-size: 8.5px; font-weight: bold; color: rgb(253, 240, 236); top: 219.2px;">К</div>

</div>
<div id="botline" class="abs"></div>


</body></html>
